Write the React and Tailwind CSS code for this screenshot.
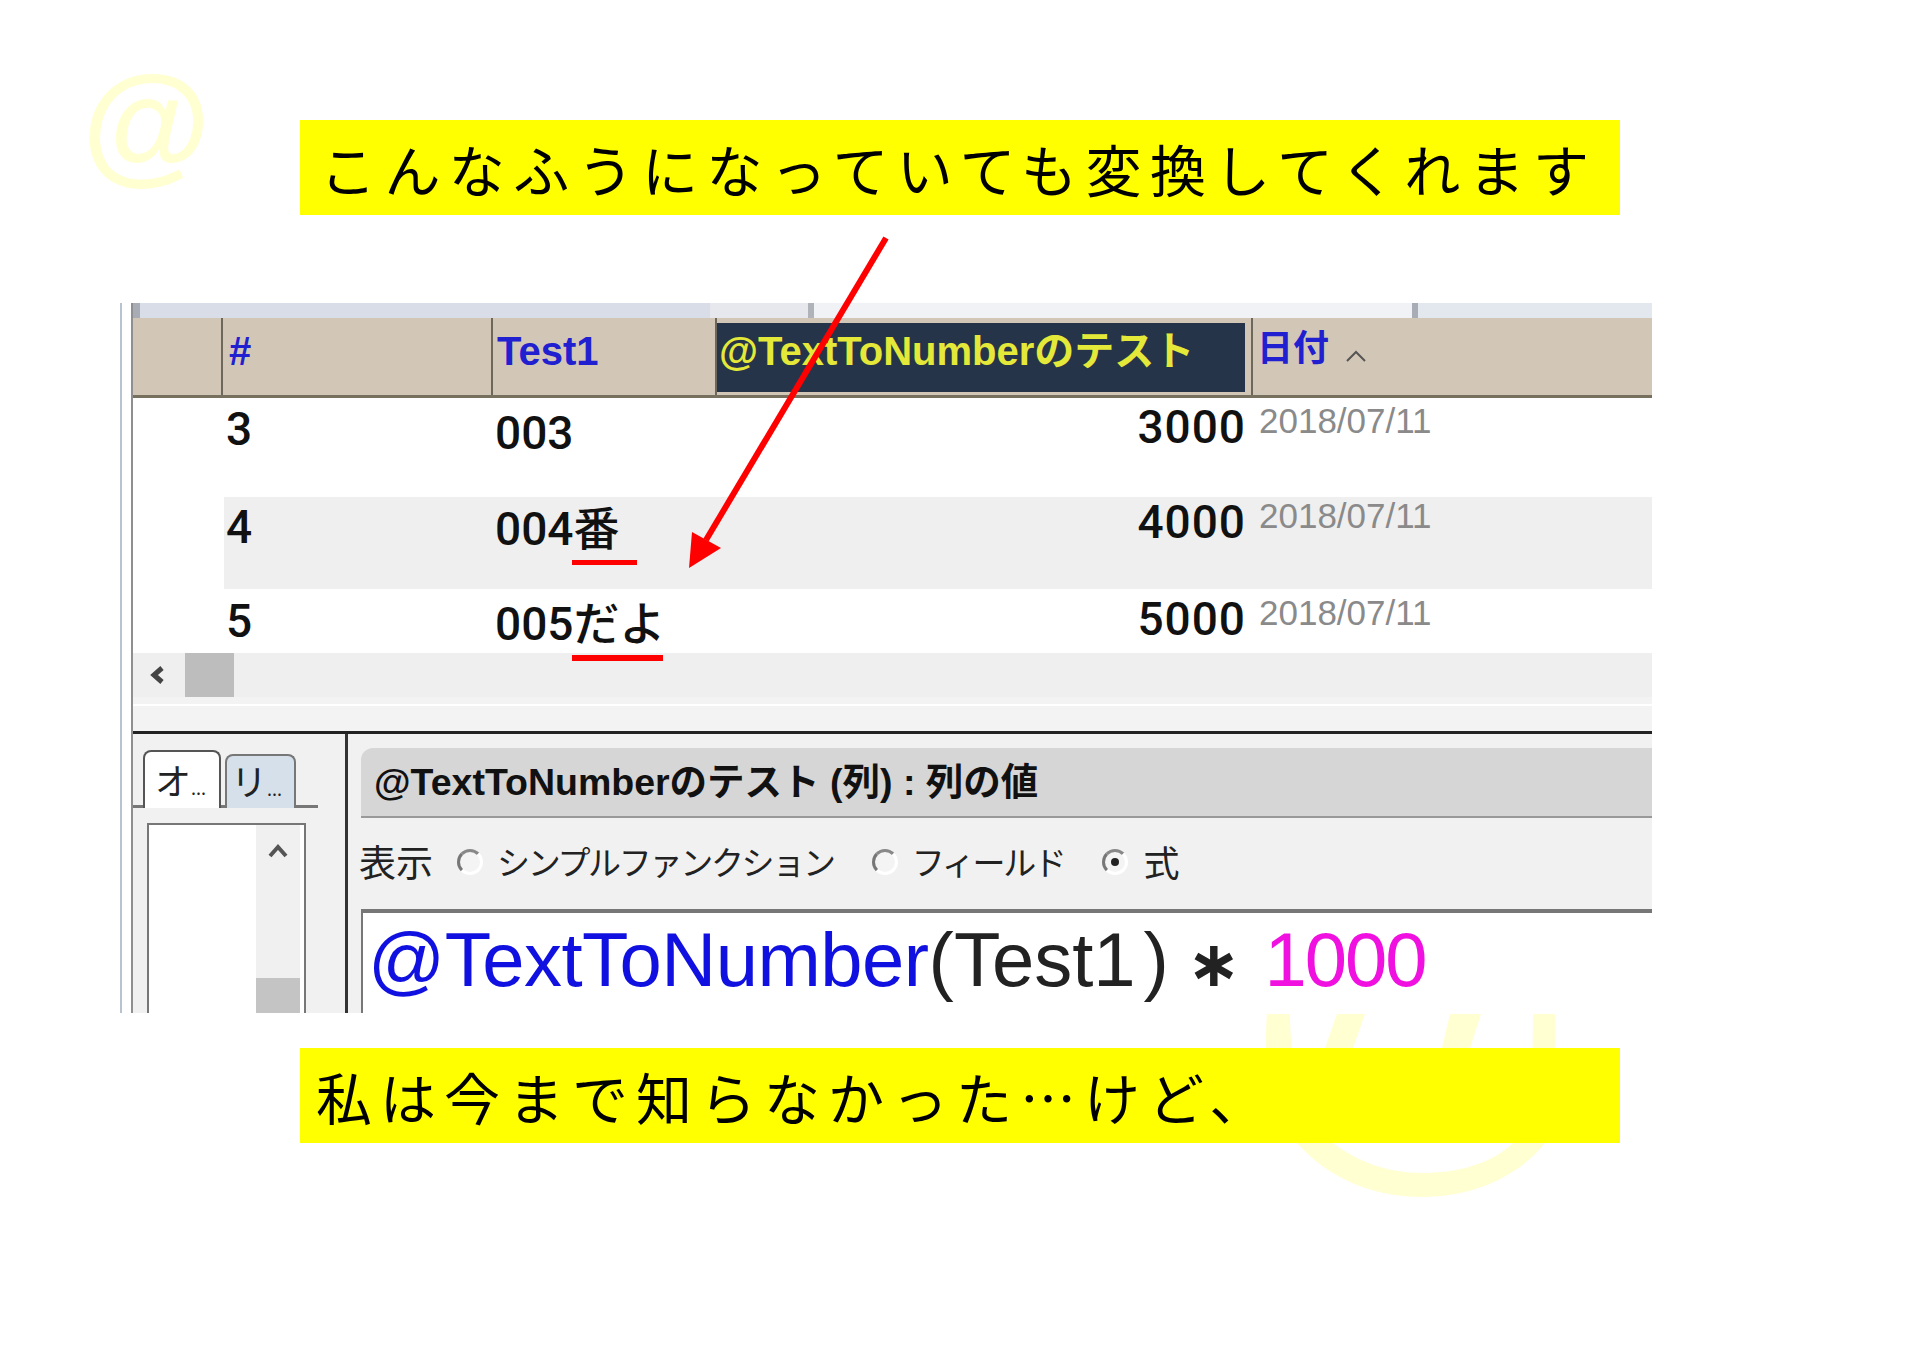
const rows = [
  { id: "3", test: "003", value: "3000", height: "h-[99px]", bg: "bg-white", pt: "pt-[8px]", testPt: "pt-[12px]", valuePt: "pt-[6px]", datePt: "pt-[5px]" },
  { id: "4", test: "004番", value: "4000", height: "h-[92px]", bg: "bg-[#efefef]", pt: "pt-[7px]", testPt: "pt-[9px]", valuePt: "pt-[2px]", datePt: "pt-[1px]" },
  { id: "5", test: "005だよ", value: "5000", height: "h-[64px]", bg: "bg-white", pt: "pt-[9px]", testPt: "pt-[12px]", valuePt: "pt-[7px]", datePt: "pt-[6px]" },
];

function Banner({ children, className }) {
  return (
    <div className={`h-[95px] w-[1320px] bg-[#ffff00] flex items-center text-[56px] text-black font-['Noto_Sans_CJK_JP',sans-serif] whitespace-nowrap ${className}`}>
      {children}
    </div>
  );
}

function Watermark() {
  return (
    <svg className="absolute left-0 top-0 w-[1920px] h-[1358px]" viewBox="0 0 1920 1358">
      <text x="82" y="168" fontSize="132" fontFamily="Liberation Sans" fontWeight="700" fill="#ffffd2">@</text>
      <path
        fill="#ffffd2"
        d="M1267 1014 C1262 1080 1275 1115 1297 1143 C1330 1180 1375 1197 1423 1197 C1475 1197 1520 1175 1545 1143 C1552 1100 1556 1060 1555 1014 L1533 1014 C1533 1080 1530 1115 1513 1143 C1490 1165 1455 1173 1423 1173 C1385 1173 1355 1160 1333 1143 C1305 1115 1290 1070 1290 1014 Z"
      />
      <path fill="#ffffd2" d="M1337 1014 L1365 1014 L1353 1048 L1325 1048 Z" />
      <path fill="#ffffd2" d="M1450 1014 L1481 1014 L1470 1048 L1442 1048 Z" />
    </svg>
  );
}

function Annotations() {
  return (
    <>
      <svg className="absolute left-0 top-0 w-[1920px] h-[1358px] pointer-events-none" viewBox="0 0 1920 1358">
        <line x1="886" y1="238" x2="706" y2="540" stroke="#ff0000" strokeWidth="6" />
        <polygon points="689,568 692,532 721,548" fill="#ff0000" />
      </svg>
      <div className="absolute left-[572px] top-[560px] w-[65px] h-[5px] bg-[#ff0000]" />
      <div className="absolute left-[572px] top-[655px] w-[91px] h-[6px] bg-[#ff0000]" />
    </>
  );
}

function Radio({ checked }) {
  return (
    <span className="w-[26px] h-[26px] rounded-full border-[3px] border-l-[#777] border-t-[#888] border-r-white border-b-white bg-[#f4f4f4] flex items-center justify-center shrink-0">
      {checked && <span className="w-[8px] h-[8px] rounded-full bg-[#222]" />}
    </span>
  );
}

function TableHeader() {
  return (
    <>
      <div className="h-[15px] shrink-0 flex bg-[#d8dde8]">
        <div className="w-[7px] bg-[#a8adb5]" />
        <div className="w-[570px] bg-[#d8dde8]" />
        <div className="w-[98px] bg-[#e6e8ee]" />
        <div className="w-[6px] bg-[#b0b4ba]" />
        <div className="w-[598px] bg-[#f1f2f5]" />
        <div className="w-[6px] bg-[#a8adb5]" />
        <div className="flex-1 bg-[#e3e7ee]" />
      </div>
      <div className="h-[80px] shrink-0 flex bg-[#d2c6b6] border-b-[3px] border-[#77705f] font-['Liberation_Sans','Noto_Sans_CJK_JP',sans-serif] text-[40px] leading-none text-[#2020d0] font-bold">
        <div className="w-[90px] border-r-2 border-[#6e675c]" />
        <div className="w-[270px] border-r-2 border-[#6e675c] pl-[6px] pt-[13px]">#</div>
        <div className="w-[224px] pl-[4px] pt-[13px] border-r-2 border-[#6e675c]">Test1</div>
        <div className="w-[528px] h-[69px] mt-[5px] bg-[#263449] text-[#e4e838] pl-[2px] pt-[8px] whitespace-nowrap">@TextToNumberのテスト</div>
        <div className="ml-[6px] pl-[4px] border-l-2 border-[#6e675c] pt-[13px] flex-1 flex items-start gap-[16px] text-[36px]">
          <span>日付</span>
          <svg className="w-[22px] h-[14px] mt-[18px]" viewBox="0 0 22 14">
            <path d="M2 12 L11 3 L20 12" fill="none" stroke="#555" strokeWidth="2" />
          </svg>
        </div>
      </div>
    </>
  );
}

function TableRows() {
  return (
    <div className="shrink-0 font-['Roboto','Noto_Sans_CJK_JP',sans-serif] text-[46px] leading-none font-medium text-[#111]">
      {rows.map((row) => (
        <div key={row.id} className={`flex ${row.height}`}>
          <div className="w-[91px] bg-white" />
          <div className={`flex-1 flex ${row.bg}`}>
            <div className={`w-[268px] pl-[2px] ${row.pt}`}>{row.id}</div>
            <div className={`w-[225px] pl-[3px] ${row.testPt} whitespace-nowrap`}>{row.test}</div>
            <div className={`w-[529px] text-right tracking-[1px] ${row.valuePt}`}>{row.value}</div>
            <div className={`pl-[13px] text-[35px] font-normal text-[#8a8a8a] font-['Liberation_Sans',sans-serif] ${row.datePt}`}>2018/07/11</div>
          </div>
        </div>
      ))}
    </div>
  );
}

function Scrollbar() {
  return (
    <div className="h-[78px] shrink-0 bg-[#f3f3f3]">
      <div className="h-[44px] bg-[#efefef] flex items-center">
        <svg className="w-[52px] h-[24px]" viewBox="0 0 52 24">
          <path d="M29 5 L21 12 L29 19" fill="none" stroke="#444" strokeWidth="5" />
        </svg>
        <div className="w-[49px] h-[44px] bg-[#bdbdbd]" />
      </div>
      <div className="mt-[7px] h-[2px] bg-white" />
    </div>
  );
}

function LeftPanel() {
  return (
    <div className="w-[215px] border-r-[3px] border-[#333] bg-[#f1f1f1] pt-[16px]">
      <div className="relative h-[58px] font-['Noto_Sans_CJK_JP',sans-serif] text-[36px] text-[#222] leading-none">
        <div className="absolute left-0 right-[27px] bottom-0 h-[3px] bg-[#777]" />
        <div className="absolute left-[10px] top-0 w-[78px] h-[58px] bg-white border-t-2 border-l-2 border-r-2 border-[#555] rounded-t-lg pl-[10px] pt-[9px] whitespace-nowrap">
          オ<span className="text-[18px]">...</span>
        </div>
        <div className="absolute left-[92px] top-[4px] w-[71px] h-[54px] bg-[#d6e0ea] border-t-2 border-l-2 border-r-2 border-[#777] rounded-t-lg pl-[4px] pt-[6px] whitespace-nowrap">
          リ<span className="text-[18px]">...</span>
        </div>
      </div>
      <div className="mt-[15px] ml-[14px] w-[159px] h-[191px] bg-white border-2 border-b-0 border-[#777] flex justify-end">
        <div className="w-[44px] mr-[4px] bg-[#f0f0f0] flex flex-col justify-between items-center pt-[16px]">
          <svg className="w-[24px] h-[18px]" viewBox="0 0 24 18">
            <path d="M4 15 L12 6 L20 15" fill="none" stroke="#555" strokeWidth="4" />
          </svg>
          <div className="w-full h-[36px] bg-[#c4c4c4]" />
        </div>
      </div>
    </div>
  );
}

function RightPanel() {
  return (
    <div className="flex-1 bg-[#f1f1f1] pt-[14px] pl-[13px] flex flex-col">
      <div className="h-[70px] shrink-0 bg-[#d6d6d6] border-b-2 border-[#999] rounded-tl-xl pl-[13px] flex items-center font-['Liberation_Sans','Noto_Sans_CJK_JP',sans-serif] font-bold text-[37.5px] text-[#111] whitespace-nowrap">
        @TextToNumberのテスト (列) : 列の値
      </div>
      <div className="h-[91px] shrink-0 pb-[4px] flex items-center font-['Noto_Sans_CJK_JP',sans-serif] text-[33px] text-[#222] whitespace-nowrap tracking-[-2.3px]">
        <span className="-ml-[2px] mr-[24px] text-[37px] tracking-normal">表示</span>
        <Radio />
        <span className="ml-[14px] mr-[38px]">シンプルファンクション</span>
        <Radio />
        <span className="ml-[14px] mr-[37px]">フィールド</span>
        <Radio checked />
        <span className="ml-[16px] mb-[2px] text-[36px] tracking-normal">式</span>
      </div>
      <div className="flex-1 bg-white border-t-[4px] border-l-2 border-[#777] pl-[5px] pt-[2px] overflow-hidden font-['Liberation_Sans',sans-serif] text-[76px] leading-[90px] whitespace-nowrap text-[#222]">
        <span className="text-[#1010e0] tracking-[-0.5px]">@TextToNumber</span>
        <span>(Test1</span>
        <span className="ml-[8px]">)</span>
        <span className="ml-[18px] font-['DejaVu_Sans',sans-serif] font-bold text-[64px]">∗</span>
        <span className="ml-[24px] text-[#f010e0] tracking-[-2px]">1000</span>
      </div>
    </div>
  );
}

export default function App() {
  return (
    <div className="relative w-[1920px] h-[1358px] bg-white overflow-hidden">
      <Watermark />
      <div className="relative pt-[120px]">
        <Banner className="ml-[300px] pl-[20px] tracking-[8.4px]">
          こんなふうになっていても変換してくれます
        </Banner>
        <div className="mt-[88px] ml-[120px] w-[1532px] h-[710px] bg-white border-l-[2px] border-[#b9c3cf] pl-[9px] overflow-hidden">
          <div className="h-full border-l-2 border-[#8f8f8f] flex flex-col">
            <TableHeader />
            <TableRows />
            <Scrollbar />
            <div className="flex-1 min-h-0 flex border-t-[3px] border-[#222]">
              <LeftPanel />
              <RightPanel />
            </div>
          </div>
        </div>
        <Banner className="mt-[35px] ml-[300px] pl-[16px] tracking-[8px]">
          私は今まで知らなかった…けど、
        </Banner>
      </div>
      <Annotations />
    </div>
  );
}
